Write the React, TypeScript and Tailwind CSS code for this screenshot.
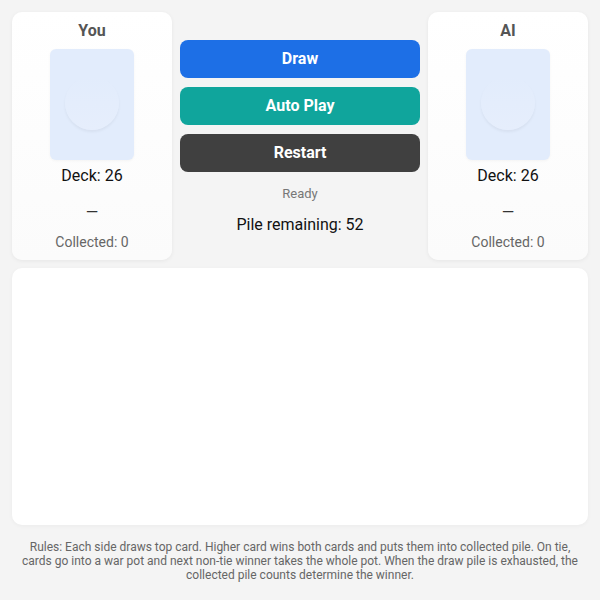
import React from 'react'

const font = { fontFamily: 'Roboto, "Liberation Sans", sans-serif' }

function PlayerPanel({ name }: { name: string }) {
  return (
    <div className="flex flex-col items-center rounded-[10px] bg-gradient-to-b from-white to-[#fbfbfb] pt-[9px] pb-2 shadow-[0_1px_4px_rgba(0,0,0,0.06)]">
      <div className="h-5 text-base font-bold leading-5 text-[#555]">{name}</div>
      <div className="mt-2 flex h-[111px] w-[84px] items-center justify-center rounded-md bg-[#e2ecfc] pb-[3px] shadow-[0_1px_3px_rgba(0,0,0,0.04)]">
        <div className="h-[54px] w-[54px] rounded-full bg-gradient-to-b from-[#e2ecfc] to-[#e6eefc] shadow-[0_2px_3px_rgba(0,0,0,0.05)]" />
      </div>
      <div className="mt-1.5 h-5 text-base leading-5 text-[#111]">Deck: 26</div>
      <div className="mt-[17px] h-5 text-base leading-5 text-[#333]">—</div>
      <div className="mt-[9px] h-5 text-sm leading-5 text-[#666]">Collected: 0</div>
    </div>
  )
}

export default function App() {
  return (
    <div className="min-h-[600px] w-[600px] bg-[#f4f4f4] p-3" style={font}>
      <div className="grid grid-cols-[160px_1fr_160px] gap-2">
        <PlayerPanel name="You" />
        <div className="flex flex-col justify-center pt-[3px]">
          <div className="flex flex-col gap-[9px]">
            <button className="h-[38px] rounded-lg bg-[#1d6fe6] text-base font-bold text-white">Draw</button>
            <button className="h-[38px] rounded-lg bg-[#10a59c] text-base font-bold text-white">Auto Play</button>
            <button className="h-[38px] rounded-lg bg-[#404040] text-base font-bold text-white">Restart</button>
          </div>
          <div className="mt-3 text-center text-[13px] leading-5 text-[#777]">Ready</div>
          <div className="mt-[11px] text-center text-base leading-5 text-[#111]">Pile remaining: 52</div>
        </div>
        <PlayerPanel name="AI" />
      </div>
      <div className="mt-2 h-[257px] rounded-[10px] bg-white shadow-[0_1px_4px_rgba(0,0,0,0.04)]" />
      <p className="mt-[15px] px-2 text-center text-xs leading-[14px] text-[#666]">
        Rules: Each side draws top card. Higher card wins both cards and puts them into collected pile. On tie, cards go into a war pot and next non-tie winner takes the whole pot. When the draw pile is exhausted, the collected pile counts determine the winner.
      </p>
    </div>
  )
}
